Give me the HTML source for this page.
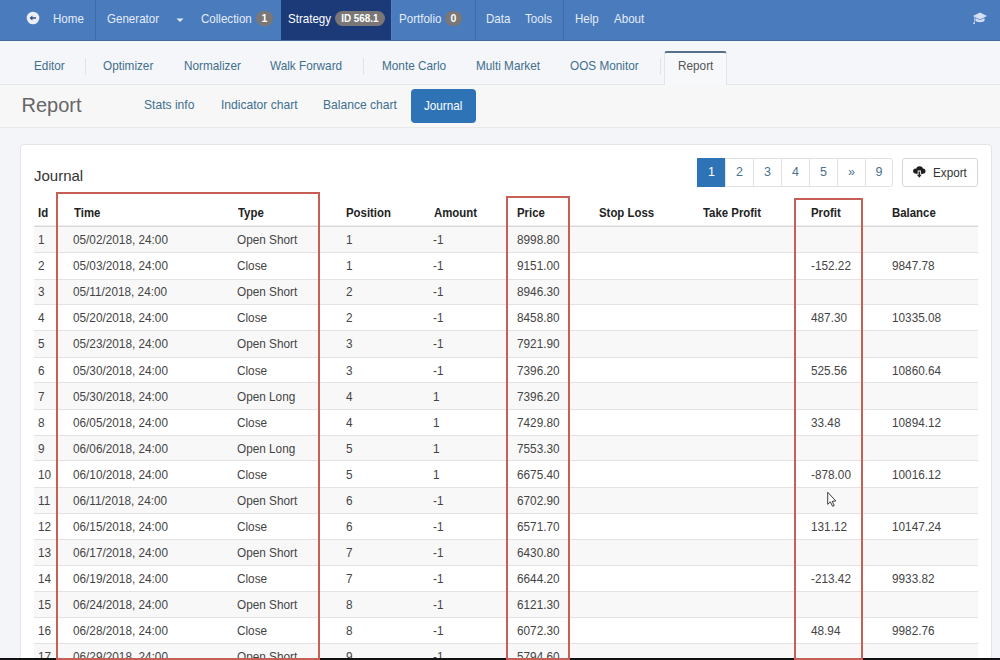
<!DOCTYPE html>
<html><head><meta charset="utf-8">
<style>
*{box-sizing:border-box;margin:0;padding:0}
html,body{width:1000px;height:660px;overflow:hidden;background:#f4f5f8;font-family:"Liberation Sans",sans-serif;position:relative}
.abs{position:absolute;white-space:nowrap}
#nav{position:absolute;left:0;top:0;width:1000px;height:41px;background:#4a7bbd;border-bottom:1px solid #45699b}
#nav .t{position:absolute;top:0;height:40px;line-height:37px;font-size:13px;color:#e4ecf8;white-space:nowrap;transform:scaleX(.89);transform-origin:0 0}
#nav .sep{position:absolute;top:0;width:1px;height:40px;background:#3f6aa6}
.badge{position:absolute;top:11px;height:14.5px;border-radius:8px;background:#7a7776;color:#fff;font-weight:bold;font-size:10.5px;line-height:14.5px;text-align:center}
#sub{position:absolute;left:0;top:41px;width:1000px;height:44px;background:#f5f6f9;border-bottom:1px solid #e6e8eb}
#sub .t{position:absolute;top:3px;line-height:44px;font-size:13px;color:#3f6f8e;white-space:nowrap;transform:scaleX(.905);transform-origin:0 0}
#sub .sep{position:absolute;top:17px;width:1px;height:17px;background:#e0e2e6}
#hdr{position:absolute;left:0;top:85px;width:1000px;height:43px;background:#f7f7f8;border-bottom:1px solid #e8e9eb}
#hdr .t{position:absolute;top:-1px;line-height:42px;font-size:13px;color:#3f6f8e;white-space:nowrap;transform:scaleX(.93);transform-origin:0 0}
#panel{position:absolute;left:20px;top:144px;width:972px;height:530px;background:#fff;border:1px solid #e4e5e8;border-radius:4px}
#tbl{position:absolute;left:34px;top:0;width:944px}
.tr{position:absolute;left:0;width:944px;height:26px;border-top:1px solid #e3e3e3;background:#fff}
.tr.odd{background:#f8f8f8}
.tr span{position:absolute;top:1px;line-height:25px;font-size:12.8px;color:#444;white-space:nowrap;transform:scaleX(.92);transform-origin:0 0}
.th{position:absolute;top:200.7px;line-height:25px;font-size:12.4px;font-weight:bold;color:#222;white-space:nowrap;transform:scaleX(.92);transform-origin:0 0}
.red{position:absolute;border:2px solid #c65f55}
.pg{position:absolute;top:158px;height:29px;width:29px;border:1px solid #e2e2e2;background:#fff;color:#4b7290;font-size:12.5px;line-height:27px;text-align:center}
</style></head><body>
<div id="nav">
  <svg class="abs" style="left:26px;top:10.5px" width="14" height="14" viewBox="0 0 14 14"><circle cx="7" cy="7" r="6.3" fill="#e9eef8"/><path d="M3.6 7 L6.4 4.6 V6.3 H10 V7.7 H6.4 V9.4 Z" fill="#2f4f84"/></svg>
  <div class="t" style="left:53px">Home</div>
  <div class="sep" style="left:95px"></div>
  <div class="t" style="left:107px">Generator</div>
  <svg class="abs" style="left:176px;top:17.5px" width="8" height="5" viewBox="0 0 8 5"><path d="M0.5 0.5 H7.5 L4 4 Z" fill="#e4ecf8"/></svg>
  <div class="t" style="left:201px">Collection</div>
  <div class="badge" style="left:256px;width:17px">1</div>
  <div class="abs" style="left:281px;top:0;width:111px;height:40px;background:#1c3a78;border-right:1px solid #5583bf"></div>
  <div class="t" style="left:288px;color:#fff">Strategy</div>
  <div class="badge" style="left:335px;width:50px"><span style="display:inline-block;transform:scaleX(.94)">ID 568.1</span></div>
  <div class="t" style="left:399px">Portfolio</div>
  <div class="badge" style="left:445px;width:17px">0</div>
  <div class="sep" style="left:475px"></div>
  <div class="t" style="left:486px">Data</div>
  <div class="t" style="left:525px">Tools</div>
  <div class="sep" style="left:563px"></div>
  <div class="t" style="left:575px">Help</div>
  <div class="t" style="left:614px">About</div>
  <svg class="abs" style="left:971px;top:11px" width="18" height="14" viewBox="0 0 18 14"><path d="M9 1.5 L16 5 L9 8.5 L2 5 Z" fill="#d6e0f2"/><path d="M4.5 7 V10 C6.5 11.5 11.5 11.5 13.5 10 V7 L9 9.3 Z" fill="#d6e0f2"/><path d="M3 5.5 V11 L2 13 H4 L3.6 11 V5.5Z" fill="#d6e0f2"/></svg>
</div>
<div id="sub">
  <div class="t" style="left:34px">Editor</div>
  <div class="sep" style="left:85px"></div>
  <div class="t" style="left:103px">Optimizer</div>
  <div class="t" style="left:184px">Normalizer</div>
  <div class="t" style="left:270px">Walk Forward</div>
  <div class="sep" style="left:363px"></div>
  <div class="t" style="left:382px">Monte Carlo</div>
  <div class="t" style="left:476px">Multi Market</div>
  <div class="t" style="left:570px">OOS Monitor</div>
  <div class="sep" style="left:660px"></div>
  <div class="abs" style="left:664px;top:10px;width:63px;height:34px;background:#f7f8fa;border:1px solid #e3e5e8;border-top:2px solid #56708a;border-bottom:none;border-radius:3px 3px 0 0"></div>
  <div class="t" style="left:678px;color:#555">Report</div>
</div>
<div id="hdr">
  <div class="abs" style="left:21.5px;top:-1px;line-height:43px;font-size:20px;color:#666">Report</div>
  <div class="t" style="left:144px">Stats info</div>
  <div class="t" style="left:221px">Indicator chart</div>
  <div class="t" style="left:323px">Balance chart</div>
  <div class="abs" style="left:411px;top:4px;width:65px;height:34px;background:#2e73b6;border-radius:4px"></div><div class="abs" style="left:424px;top:4px;color:#fff;font-size:13px;line-height:33px;transform:scaleX(.9);transform-origin:0 0">Journal</div>
</div>
<div id="panel"></div>
<div class="abs" style="left:34px;top:163.5px;font-size:15px;line-height:24px;color:#333">Journal</div>
<div class="pg" style="left:697px;background:#2e73b6;border-color:#2e73b6;color:#fff">1</div>
<div class="pg" style="left:725px">2</div>
<div class="pg" style="left:753px">3</div>
<div class="pg" style="left:781px">4</div>
<div class="pg" style="left:809px">5</div>
<div class="pg" style="left:837px">&raquo;</div>
<div class="pg" style="left:865px;width:28px;border-radius:0 3px 3px 0">9</div>
<div class="abs" style="left:902px;top:158px;width:76px;height:29px;border:1px solid #d6d6d6;border-radius:3px;background:#fff"></div>
<svg class="abs" style="left:912px;top:166px" width="15" height="13" viewBox="0 0 15 13"><g fill="#1e1e1e"><circle cx="3.6" cy="5.1" r="2.5"/><circle cx="7.6" cy="3.6" r="3.3"/><circle cx="10.9" cy="5.1" r="2.6"/><rect x="3.6" y="4" width="7.3" height="3.7"/></g><path d="M5.7 4.6 H8.9 V7.9 H10.6 V8.6 L7.3 12.6 L4 8.6 V7.9 H5.7 Z" fill="#fff"/><path d="M6.5 5.4 H8.1 V8.7 H9.8 L7.3 11.8 L4.8 8.7 H6.5 Z" fill="#2a2a2a"/></svg>
<div class="abs" style="left:933px;top:160px;font-size:13px;line-height:25px;color:#333;transform:scaleX(.9);transform-origin:0 0">Export</div>
<div id="tbl">
  <div class="th" style="left:4px">Id</div>
  <div class="th" style="left:40px">Time</div>
  <div class="th" style="left:204px">Type</div>
  <div class="th" style="left:312px">Position</div>
  <div class="th" style="left:400px">Amount</div>
  <div class="th" style="left:483px">Price</div>
  <div class="th" style="left:565px">Stop Loss</div>
  <div class="th" style="left:669px">Take Profit</div>
  <div class="th" style="left:777px">Profit</div>
  <div class="th" style="left:858px">Balance</div>
<div class="tr odd" style="top:226px;height:26px"><span style="left:4px;top:0.3px">1</span><span style="left:39px;top:0.3px">05/02/2018, 24:00</span><span style="left:203px;top:0.3px">Open Short</span><span style="left:312px;top:0.3px">1</span><span style="left:399px;top:0.3px">-1</span><span style="left:483px;top:0.3px">8998.80</span></div>
<div class="tr" style="top:252px;height:27px"><span style="left:4px;top:0.34px">2</span><span style="left:39px;top:0.34px">05/03/2018, 24:00</span><span style="left:203px;top:0.34px">Close</span><span style="left:312px;top:0.34px">1</span><span style="left:399px;top:0.34px">-1</span><span style="left:483px;top:0.34px">9151.00</span><span style="left:777px;top:0.34px">-152.22</span><span style="left:858px;top:0.34px">9847.78</span></div>
<div class="tr odd" style="top:279px;height:25px"><span style="left:4px;top:-0.62px">3</span><span style="left:39px;top:-0.62px">05/11/2018, 24:00</span><span style="left:203px;top:-0.62px">Open Short</span><span style="left:312px;top:-0.62px">2</span><span style="left:399px;top:-0.62px">-1</span><span style="left:483px;top:-0.62px">8946.30</span></div>
<div class="tr" style="top:304px;height:26px"><span style="left:4px;top:0.42px">4</span><span style="left:39px;top:0.42px">05/20/2018, 24:00</span><span style="left:203px;top:0.42px">Close</span><span style="left:312px;top:0.42px">2</span><span style="left:399px;top:0.42px">-1</span><span style="left:483px;top:0.42px">8458.80</span><span style="left:777px;top:0.42px">487.30</span><span style="left:858px;top:0.42px">10335.08</span></div>
<div class="tr odd" style="top:330px;height:27px"><span style="left:4px;top:0.46px">5</span><span style="left:39px;top:0.46px">05/23/2018, 24:00</span><span style="left:203px;top:0.46px">Open Short</span><span style="left:312px;top:0.46px">3</span><span style="left:399px;top:0.46px">-1</span><span style="left:483px;top:0.46px">7921.90</span></div>
<div class="tr" style="top:357px;height:25px"><span style="left:4px;top:-0.5px">6</span><span style="left:39px;top:-0.5px">05/30/2018, 24:00</span><span style="left:203px;top:-0.5px">Close</span><span style="left:312px;top:-0.5px">3</span><span style="left:399px;top:-0.5px">-1</span><span style="left:483px;top:-0.5px">7396.20</span><span style="left:777px;top:-0.5px">525.56</span><span style="left:858px;top:-0.5px">10860.64</span></div>
<div class="tr odd" style="top:382px;height:27px"><span style="left:4px;top:0.54px">7</span><span style="left:39px;top:0.54px">05/30/2018, 24:00</span><span style="left:203px;top:0.54px">Open Long</span><span style="left:312px;top:0.54px">4</span><span style="left:399px;top:0.54px">1</span><span style="left:483px;top:0.54px">7396.20</span></div>
<div class="tr" style="top:409px;height:26px"><span style="left:4px;top:-0.42px">8</span><span style="left:39px;top:-0.42px">06/05/2018, 24:00</span><span style="left:203px;top:-0.42px">Close</span><span style="left:312px;top:-0.42px">4</span><span style="left:399px;top:-0.42px">1</span><span style="left:483px;top:-0.42px">7429.80</span><span style="left:777px;top:-0.42px">33.48</span><span style="left:858px;top:-0.42px">10894.12</span></div>
<div class="tr odd" style="top:435px;height:25px"><span style="left:4px;top:-0.38px">9</span><span style="left:39px;top:-0.38px">06/06/2018, 24:00</span><span style="left:203px;top:-0.38px">Open Long</span><span style="left:312px;top:-0.38px">5</span><span style="left:399px;top:-0.38px">1</span><span style="left:483px;top:-0.38px">7553.30</span></div>
<div class="tr" style="top:460px;height:27px"><span style="left:4px;top:0.66px">10</span><span style="left:39px;top:0.66px">06/10/2018, 24:00</span><span style="left:203px;top:0.66px">Close</span><span style="left:312px;top:0.66px">5</span><span style="left:399px;top:0.66px">1</span><span style="left:483px;top:0.66px">6675.40</span><span style="left:777px;top:0.66px">-878.00</span><span style="left:858px;top:0.66px">10016.12</span></div>
<div class="tr odd" style="top:487px;height:26px"><span style="left:4px;top:-0.3px">11</span><span style="left:39px;top:-0.3px">06/11/2018, 24:00</span><span style="left:203px;top:-0.3px">Open Short</span><span style="left:312px;top:-0.3px">6</span><span style="left:399px;top:-0.3px">-1</span><span style="left:483px;top:-0.3px">6702.90</span></div>
<div class="tr" style="top:513px;height:26px"><span style="left:4px;top:-0.26px">12</span><span style="left:39px;top:-0.26px">06/15/2018, 24:00</span><span style="left:203px;top:-0.26px">Close</span><span style="left:312px;top:-0.26px">6</span><span style="left:399px;top:-0.26px">-1</span><span style="left:483px;top:-0.26px">6571.70</span><span style="left:777px;top:-0.26px">131.12</span><span style="left:858px;top:-0.26px">10147.24</span></div>
<div class="tr odd" style="top:539px;height:26px"><span style="left:4px;top:-0.22px">13</span><span style="left:39px;top:-0.22px">06/17/2018, 24:00</span><span style="left:203px;top:-0.22px">Open Short</span><span style="left:312px;top:-0.22px">7</span><span style="left:399px;top:-0.22px">-1</span><span style="left:483px;top:-0.22px">6430.80</span></div>
<div class="tr" style="top:565px;height:26px"><span style="left:4px;top:-0.18px">14</span><span style="left:39px;top:-0.18px">06/19/2018, 24:00</span><span style="left:203px;top:-0.18px">Close</span><span style="left:312px;top:-0.18px">7</span><span style="left:399px;top:-0.18px">-1</span><span style="left:483px;top:-0.18px">6644.20</span><span style="left:777px;top:-0.18px">-213.42</span><span style="left:858px;top:-0.18px">9933.82</span></div>
<div class="tr odd" style="top:591px;height:26px"><span style="left:4px;top:-0.14px">15</span><span style="left:39px;top:-0.14px">06/24/2018, 24:00</span><span style="left:203px;top:-0.14px">Open Short</span><span style="left:312px;top:-0.14px">8</span><span style="left:399px;top:-0.14px">-1</span><span style="left:483px;top:-0.14px">6121.30</span></div>
<div class="tr" style="top:617px;height:26px"><span style="left:4px;top:-0.1px">16</span><span style="left:39px;top:-0.1px">06/28/2018, 24:00</span><span style="left:203px;top:-0.1px">Close</span><span style="left:312px;top:-0.1px">8</span><span style="left:399px;top:-0.1px">-1</span><span style="left:483px;top:-0.1px">6072.30</span><span style="left:777px;top:-0.1px">48.94</span><span style="left:858px;top:-0.1px">9982.76</span></div>
<div class="tr odd" style="top:643px;height:26px"><span style="left:4px;top:-0.06px">17</span><span style="left:39px;top:-0.06px">06/29/2018, 24:00</span><span style="left:203px;top:-0.06px">Open Short</span><span style="left:312px;top:-0.06px">9</span><span style="left:399px;top:-0.06px">-1</span><span style="left:483px;top:-0.06px">5794.60</span></div>
  <div class="abs" style="left:0;top:225px;width:944px;height:1px;background:#ececec"></div><div class="abs" style="left:0;top:226px;width:944px;height:1px;background:#d9d9d9"></div>
</div>
<div class="abs" style="left:0;top:658px;width:1000px;height:2px;background:#111"></div>
<div class="red" style="left:56px;top:192px;width:264px;height:468px"></div>
<div class="red" style="left:506px;top:196px;width:64px;height:464px"></div>
<div class="red" style="left:794px;top:198px;width:69px;height:462px"></div>
<svg class="abs" style="left:826px;top:491px" width="12" height="17" viewBox="0 0 12 17"><path d="M1.7 1.2 V13.3 L4.4 10.9 L6.6 15.3 L8.2 14.5 L6.2 10.3 L9.8 10 Z" fill="#fff" stroke="#333" stroke-width="0.95" stroke-linejoin="round"/></svg>
</body></html>
